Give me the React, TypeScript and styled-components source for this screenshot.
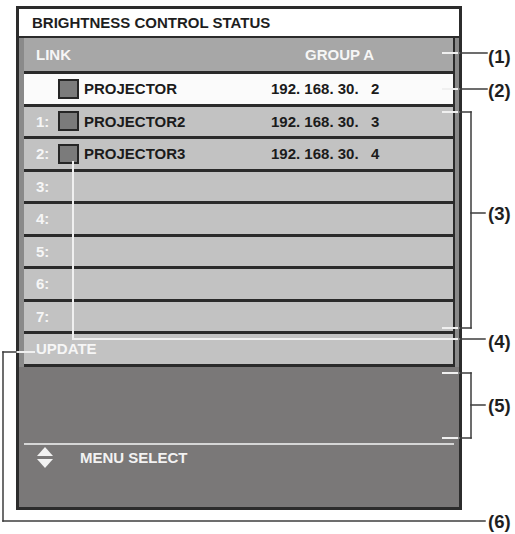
import React from 'react';
import styled, { createGlobalStyle } from 'styled-components';

const GlobalStyle = createGlobalStyle`
    html, body {
        margin: 0;
        padding: 0;
        background: #ffffff;
    }
    body {
        font-family: "Liberation Sans", Arial, sans-serif;
    }
`;

const Page = styled.div`
    position: relative;
    width: 515px;
    height: 534px;
    padding: 6px 0 0 16px;
    box-sizing: border-box;
    overflow: hidden;
`;

const Frame = styled.div`
    width: 446px;
    height: 504px;
    border: 3px solid #2c2c2c;
    box-sizing: border-box;
    display: flex;
    flex-direction: column;
    background: #8a8a8a;
`;

const Title = styled.div`
    height: 29px;
    line-height: 27px;
    background: #ffffff;
    border-bottom: 2px solid #2c2c2c;
    box-sizing: border-box;
    padding-left: 13px;
    font-size: 15px;
    font-weight: bold;
    color: #1e1e1e;
`;

const List = styled.div`
    display: flex;
    flex-direction: column;
    padding: 0 4px 0 5px;
    background: #8a8a8a;
`;

const Row = styled.div<{ $variant: 'head' | 'active' | 'plain'; $h: number }>`
    height: ${({ $h }) => $h}px;
    box-sizing: border-box;
    border-bottom: 3px solid #2a2a2a;
    border-right: 2px solid #2a2a2a;
    background: ${({ $variant }) =>
        $variant === 'head' ? '#a7a7a7' : $variant === 'active' ? '#fbfbfb' : '#c2c2c2'};
    display: grid;
    grid-template-columns: 22px 26px 187px 1fr;
    align-items: center;
    padding-left: 12px;
    font-size: 15px;
    font-weight: bold;
    white-space: pre;
`;

const Num = styled.span`
    color: #f6f6f6;
`;

const HeadLabel = styled.span<{ $col: string; $indent?: number }>`
    grid-column: ${({ $col }) => $col};
    padding-left: ${({ $indent }) => $indent ?? 0}px;
    color: #f6f6f6;
`;

const Swatch = styled.span`
    width: 21px;
    height: 20px;
    box-sizing: border-box;
    border: 2.5px solid #262626;
    background: #7b7b7b;
`;

const Name = styled.span`
    color: #1b1b1b;
`;

const Ip = styled.span`
    color: #1b1b1b;
`;

const Footer = styled.div`
    flex: 1;
    background: #7a7878;
    display: flex;
    flex-direction: column;
    padding-top: 76px;
`;

const Divider = styled.div`
    height: 2px;
    margin: 0 5px 0 5px;
    background: #d6d6d6;
`;

const MenuRow = styled.div`
    height: 26px;
    display: flex;
    align-items: center;
    padding-left: 18px;
    gap: 27px;
    color: #f2f2f2;
    font-size: 15px;
    font-weight: bold;
`;

const Overlay = styled.svg`
    position: absolute;
    left: 0;
    top: 0;
    pointer-events: none;
`;

const Callout = styled.text`
    font-family: "Liberation Sans", Arial, sans-serif;
    font-size: 18.5px;
    font-weight: bold;
    fill: #1f1f1f;
`;

type Entry = { num: string; name?: string; ip?: string; active?: boolean };

const entries: Entry[] = [
    { num: '', name: 'PROJECTOR', ip: '192. 168. 30.   2', active: true },
    { num: '1:', name: 'PROJECTOR2', ip: '192. 168. 30.   3' },
    { num: '2:', name: 'PROJECTOR3', ip: '192. 168. 30.   4' },
    { num: '3:' },
    { num: '4:' },
    { num: '5:' },
    { num: '6:' },
    { num: '7:' },
];

const ArrowsIcon = () => (
    <svg width="16" height="22" viewBox="0 0 16 22">
        <polygon points="8,0 16,9 0,9" fill="#f2f2f2" />
        <polygon points="0,12 16,12 8,21" fill="#f2f2f2" />
    </svg>
);

// leader lines: [x1, y1, x2, y2, light?]
const segs: [number, number, number, number, boolean][] = [
    [443, 53, 459, 53, true], [459, 53, 487, 53, false],
    [443, 89, 459, 89, true], [459, 89, 487, 89, false],
    [443, 112, 459, 112, true], [459, 112, 471, 112, false],
    [471, 112, 471, 328, false],
    [443, 328, 459, 328, true], [459, 328, 471, 328, false],
    [471, 213, 485, 213, false],
    [73, 162, 73, 339, true], [73, 339, 459, 339, true], [459, 339, 485, 339, false],
    [443, 373, 459, 373, true], [459, 373, 471, 373, false],
    [471, 373, 471, 438, false],
    [443, 438, 459, 438, true], [459, 438, 471, 438, false],
    [471, 405, 485, 405, false],
    [34, 352, 16, 352, true], [16, 352, 3, 352, false],
    [3, 352, 3, 521, false], [3, 521, 485, 521, false],
];

const callouts: [string, number][] = [
    ['(1)', 56], ['(2)', 90], ['(3)', 213], ['(4)', 341], ['(5)', 405], ['(6)', 521],
];

export default function App() {
    return (
        <Page>
            <GlobalStyle />
            <Frame>
                <Title>BRIGHTNESS CONTROL STATUS</Title>
                <List>
                    <Row $variant="head" $h={36}>
                        <HeadLabel $col="1 / 4">LINK</HeadLabel>
                        <HeadLabel $col="4" $indent={34}>GROUP A</HeadLabel>
                    </Row>
                    {entries.map((e, i) => (
                        <Row key={i} $variant={e.active ? 'active' : 'plain'} $h={32.5}>
                            <Num>{e.num}</Num>
                            {e.name ? <Swatch /> : <span />}
                            <Name>{e.name}</Name>
                            <Ip>{e.ip}</Ip>
                        </Row>
                    ))}
                    <Row $variant="plain" $h={32.5}>
                        <HeadLabel $col="1 / 4">UPDATE</HeadLabel>
                    </Row>
                </List>
                <Footer>
                    <Divider />
                    <MenuRow>
                        <ArrowsIcon />
                        <span>MENU SELECT</span>
                    </MenuRow>
                </Footer>
            </Frame>
            <Overlay width="515" height="534" viewBox="0 0 515 534">
                {segs.map(([x1, y1, x2, y2, light], i) => (
                    <line
                        key={i}
                        x1={x1}
                        y1={y1}
                        x2={x2}
                        y2={y2}
                        stroke={light ? '#f0f0f0' : '#3c3c3c'}
                        strokeWidth={light ? 2 : 1.5}
                        strokeLinecap="square"
                    />
                ))}
                {callouts.map(([t, y]) => (
                    <Callout key={t} x={488} y={y} dominantBaseline="central">
                        {t}
                    </Callout>
                ))}
            </Overlay>
        </Page>
    );
}
